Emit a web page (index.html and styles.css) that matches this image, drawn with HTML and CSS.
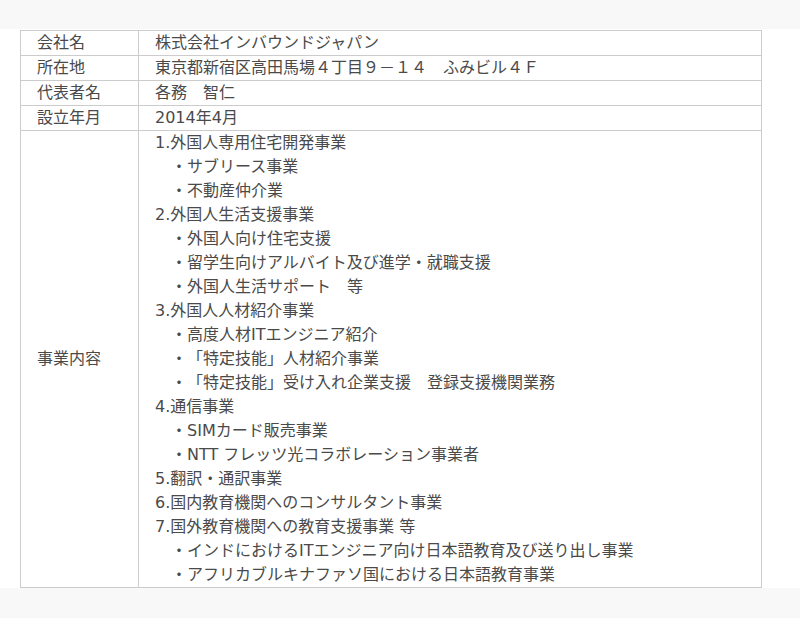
FILE: index.html
```html
<!DOCTYPE html>
<html lang="ja">
<head>
    <meta charset="UTF-8">
    <title>会社概要</title>
    <link rel="stylesheet" href="styles.css">
</head>
<body>
    <section class="company">
        <table class="info">
            <colgroup>
                <col class="col-label">
                <col>
            </colgroup>
            <tr>
                <th>会社名</th>
                <td>株式会社インバウンドジャパン</td>
            </tr>
            <tr>
                <th>所在地</th>
                <td>東京都新宿区高田馬場４丁目９－１４　ふみビル４Ｆ</td>
            </tr>
            <tr>
                <th>代表者名</th>
                <td>各務　智仁</td>
            </tr>
            <tr>
                <th>設立年月</th>
                <td>2014年4月</td>
            </tr>
            <tr>
                <th>事業内容</th>
                <td>
                    <p>1.外国人専用住宅開発事業</p>
                    <p class="sub">　・サブリース事業</p>
                    <p class="sub">　・不動産仲介業</p>
                    <p>2.外国人生活支援事業</p>
                    <p class="sub">　・外国人向け住宅支援</p>
                    <p class="sub">　・留学生向けアルバイト及び進学・就職支援</p>
                    <p class="sub">　・外国人生活サポート　等</p>
                    <p>3.外国人人材紹介事業</p>
                    <p class="sub">　・高度人材ITエンジニア紹介</p>
                    <p class="sub">　・「特定技能」人材紹介事業</p>
                    <p class="sub">　・「特定技能」受け入れ企業支援　登録支援機関業務</p>
                    <p>4.通信事業</p>
                    <p class="sub">　・SIMカード販売事業</p>
                    <p class="sub">　・NTT フレッツ光コラボレーション事業者</p>
                    <p>5.翻訳・通訳事業</p>
                    <p>6.国内教育機関へのコンサルタント事業</p>
                    <p>7.国外教育機関への教育支援事業 等</p>
                    <p class="sub">　・インドにおけるITエンジニア向け日本語教育及び送り出し事業</p>
                    <p class="sub">　・アフリカブルキナファソ国における日本語教育事業</p>
                </td>
            </tr>
        </table>
    </section>
</body>
</html>
```

FILE: styles.css
```css
body {
    margin: 0;
    padding-top: 29px;
    background-color: #f8f8f8;
    font-family: "DejaVu Sans", "Noto Sans CJK JP", sans-serif;
    font-size: 16px;
    line-height: 24px;
    color: #4a4a4a;
    text-spacing-trim: space-all;
}

.company {
    background-color: #fff;
    padding: 1px 0 0 20px;
}

.info {
    width: 742px;
    table-layout: fixed;
    border-collapse: collapse;
}

.col-label {
    width: 118px;
}

.info th,
.info td {
    border: 1px solid #ccc;
    padding: 0 16px;
    text-align: left;
    font-weight: normal;
    white-space: nowrap;
}

.info th {
    vertical-align: middle;
}

.info td p {
    margin: 0;
}
```
